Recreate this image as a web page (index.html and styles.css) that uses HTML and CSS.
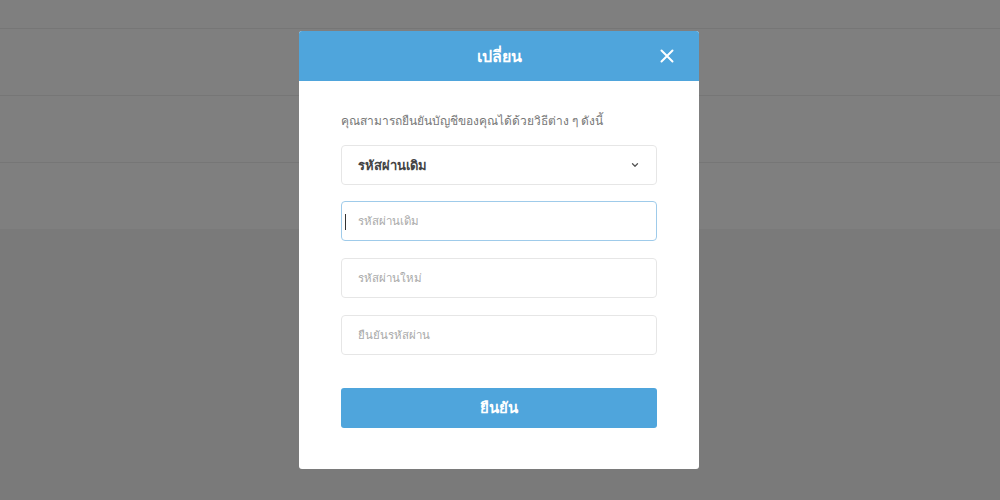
FILE: index.html
```html
<!DOCTYPE html>
<html lang="th">
<head>
<meta charset="utf-8">
<title>เปลี่ยน</title>
<link rel="stylesheet" href="styles.css">
</head>
<body>
<div class="page">
  <div class="topbar"></div>
  <div class="row"></div>
  <div class="row"></div>
  <div class="row last"></div>
</div>
<div class="overlay">
  <div class="modal">
    <div class="modal-head">
      <span class="modal-title">เปลี่ยน</span>
      <span class="close">
        <svg width="14" height="14" viewBox="0 0 14 14"><path d="M1.5 1.5 L12.5 12.5 M12.5 1.5 L1.5 12.5" stroke="#fff" stroke-width="2" stroke-linecap="round"/></svg>
      </span>
    </div>
    <div class="modal-body">
      <p class="intro">คุณสามารถยืนยันบัญชีของคุณได้ด้วยวิธีต่าง ๆ ดังนี้</p>
      <div class="select">
        <span>รหัสผ่านเดิม</span>
        <svg width="10" height="10" viewBox="0 0 10 10"><path d="M2.5 3.8 L5 6.2 L7.5 3.8" fill="none" stroke="#555" stroke-width="1.3" stroke-linecap="round" stroke-linejoin="round"/></svg>
      </div>
      <div class="field focus"><span class="caret"></span><span class="ph">รหัสผ่านเดิม</span></div>
      <div class="field"><span class="ph">รหัสผ่านใหม่</span></div>
      <div class="field"><span class="ph">ยืนยันรหัสผ่าน</span></div>
      <div class="btn">ยืนยัน</div>
    </div>
  </div>
</div>
</body>
</html>
```
FILE: styles.css
```css
html, body {
  margin: 0;
  padding: 0;
  height: 100%;
}
body {
  background: #f4f4f4;
  font-family: "Noto Sans", "Liberation Sans", sans-serif;
  position: relative;
  overflow: hidden;
}
.page {
  background: #fff;
}
.topbar {
  height: 28px;
  border-bottom: 1px solid #ececec;
}
.row {
  height: 66px;
  border-bottom: 1px solid #ececec;
}
.row.last {
  border-bottom: none;
}
.overlay {
  position: absolute;
  inset: 0;
  background: rgba(0, 0, 0, 0.5);
  display: flex;
  justify-content: center;
  align-items: flex-start;
  padding: 31px 2px 0 0;
}
.modal {
  width: 400px;
  background: #fff;
  border-radius: 3px;
  overflow: hidden;
}
.modal-head {
  height: 50px;
  background: #4fa5dc;
  display: flex;
  align-items: center;
  justify-content: center;
  position: relative;
}
.modal-title {
  color: #fff;
  font-size: 16px;
  font-weight: bold;
}
.close {
  position: absolute;
  right: 25px;
  top: 18px;
  width: 14px;
  height: 14px;
  display: flex;
}
.modal-body {
  padding: 30px 42px 41px;
  display: flex;
  flex-direction: column;
}
.intro {
  margin: 0 0 14px;
  font-size: 12px;
  line-height: 20px;
  color: #777;
}
.select {
  height: 38px;
  border: 1px solid #e6e6e6;
  border-radius: 4px;
  display: flex;
  align-items: center;
  justify-content: space-between;
  padding: 0 16px 0 16px;
  font-size: 13px;
  font-weight: 600;
  color: #444;
  margin-bottom: 16px;
}
.field {
  height: 38px;
  border: 1px solid #e6e6e6;
  border-radius: 4px;
  display: flex;
  align-items: center;
  padding-left: 16px;
  margin-bottom: 17px;
  position: relative;
}
.field.focus {
  border-color: #9fcbea;
}
.caret {
  position: absolute;
  left: 3px;
  top: 12px;
  width: 1px;
  height: 16px;
  background: #333;
}
.ph {
  font-size: 11.5px;
  color: #aaa;
}
.btn {
  margin-top: 16px;
  height: 40px;
  border-radius: 3px;
  background: #4fa5dc;
  color: #fff;
  font-size: 15px;
  font-weight: bold;
  display: flex;
  align-items: center;
  justify-content: center;
}
```
